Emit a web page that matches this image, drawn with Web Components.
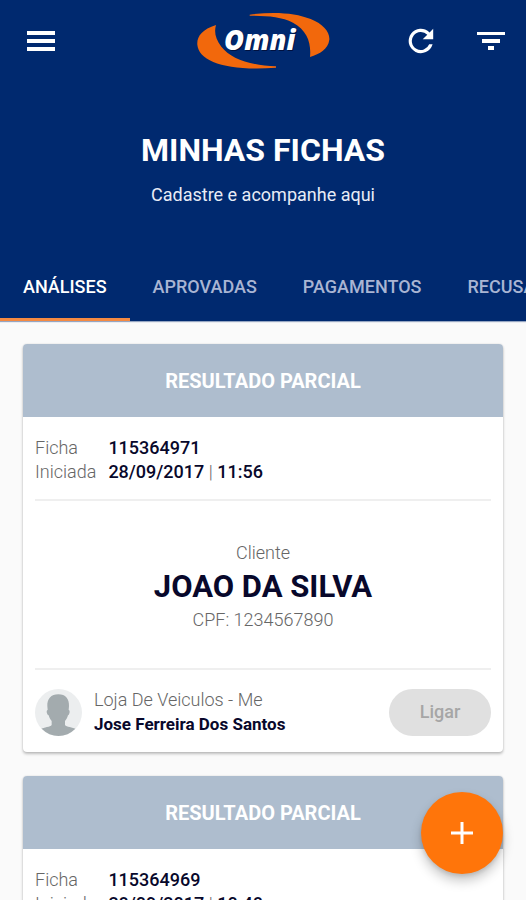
<!DOCTYPE html>
<html lang="pt-BR">
<head>
<meta charset="utf-8">
<meta name="viewport" content="width=device-width, initial-scale=1">
<title>Minhas Fichas</title>
<style>
  body { margin: 0; font-family: Roboto, "Liberation Sans", sans-serif; font-size: 18px; line-height: 24px; color: #08082b; background: #fafafa; }
</style>
</head>
<body>
<fichas-app></fichas-app>

<template id="t-app">
  <style>
    :host { display: flex; flex-direction: column; height: 100vh; }
    header { background: #00296f; color: #fff; flex: none; box-shadow: 0 1px 1px #00296f66; }
    main { flex: 1; min-height: 0; overflow-y: auto; scrollbar-width: none; display: flex; flex-direction: column; gap: 24px; padding: 23px; }
    fab-button { position: fixed; right: 23px; bottom: 26px; }
  </style>
  <header>
    <top-bar></top-bar>
    <page-title>
      MINHAS FICHAS
      <span slot="subtitle">Cadastre e acompanhe aqui</span>
    </page-title>
    <tab-strip>
      <tab-item selected>ANÁLISES</tab-item>
      <tab-item>APROVADAS</tab-item>
      <tab-item>PAGAMENTOS</tab-item>
      <tab-item>RECUSADAS</tab-item>
    </tab-strip>
  </header>
  <main>
    <ficha-card>
      <span slot="status">RESULTADO PARCIAL</span>
      <span slot="number">115364971</span>
      <span slot="date">28/09/2017</span>
      <span slot="time">11:56</span>
      <span slot="client">JOAO DA SILVA</span>
      <span slot="cpf">1234567890</span>
      <span slot="store">Loja De Veiculos - Me</span>
      <span slot="seller">Jose Ferreira Dos Santos</span>
    </ficha-card>
    <ficha-card>
      <span slot="status">RESULTADO PARCIAL</span>
      <span slot="number">115364969</span>
      <span slot="date">28/09/2017</span>
      <span slot="time">10:48</span>
      <span slot="client">JOAO DA SILVA</span>
      <span slot="cpf">1234567890</span>
      <span slot="store">Loja De Veiculos - Me</span>
      <span slot="seller">Jose Ferreira Dos Santos</span>
    </ficha-card>
  </main>
  <fab-button></fab-button>
</template>

<template id="t-bar">
  <style>
    :host { display: grid; grid-template-columns: 1fr auto 1fr; align-items: center; height: 82px; padding: 0 18px; }
    button { display: grid; place-items: center; width: 46px; height: 46px; padding: 0; border: 0; background: none; color: inherit; cursor: pointer; }
    .actions { display: flex; gap: 24px; justify-content: flex-end; margin-right: -6px; }
    svg { display: block; fill: #fff; }
  </style>
  <button aria-label="Menu">
    <svg width="28" height="20" viewBox="0 0 28 20"><path d="M0 0h28v4H0zM0 8h28v4H0zM0 16h28v4H0z"/></svg>
  </button>
  <omni-logo></omni-logo>
  <div class="actions">
    <button aria-label="Atualizar">
      <svg width="26" height="26" viewBox="0 0 26 26"><path d="M21.600 4.400A12.200 12.200 0 1 0 24.600 16.300H21.200A9 9 0 1 1 19.300 6.700L14.700 11.300H25.200V.8z"/></svg>
    </button>
    <button aria-label="Filtrar">
      <svg width="28" height="20" viewBox="0 0 28 20"><path d="M0 1h28v3H0zM5 8h18v4H5zM11 15h6v4h-6z"/></svg>
    </button>
  </div>
</template>

<template id="t-logo">
  <style>
    :host { display: block; }
    svg { display: block; }
    text { font-family: "Open Sans", Lato, sans-serif; font-weight: 800; font-style: italic; font-size: 82px; }
  </style>
  <svg width="136" height="60" viewBox="45 33 408 180" role="img" aria-label="Omni">
    <g fill="#f2680c">
      <path d="M108 75C66 88 50 110 52 134C56 184 140 214 288 203V199C210 196 152 176 124 140C106 116 102 96 108 75Z"/>
      <path d="M209 44C280 34 345 38 392 57C430 72 450 97 448 119C444 148 420 161 390 171C394 128 382 92 339 68C304 50 262 47 209 47Z"/>
    </g>
    <text x="135" y="153" fill="#00113f">Omni</text>
    <text x="132" y="149" fill="#fff">Omni</text>
  </svg>
</template>

<template id="t-title">
  <style>
    :host { display: block; text-align: center; padding: 48px 24px 47px; }
    h1 { margin: 0; font-size: 32px; line-height: 40px; font-weight: 700; }
    p { margin: 13px 0 0; color: #e8ecf6; }
  </style>
  <h1><slot></slot></h1>
  <p><slot name="subtitle"></slot></p>
</template>

<template id="t-tabs">
  <style>
    :host { display: flex; overflow-x: auto; scrollbar-width: none; }
  </style>
  <slot></slot>
</template>

<template id="t-tab">
  <style>
    :host { display: block; flex: none; }
    button { display: block; height: 67px; padding: 2px 23px 0; border: 0; border-bottom: 3px solid transparent; background: none; font: 500 18px/24px Roboto, "Liberation Sans", sans-serif; color: #a9b5d3; cursor: pointer; }
    :host([selected]) button { color: #fff; border-color: #f58a42; }
  </style>
  <button><slot></slot></button>
</template>

<template id="t-card">
  <style>
    :host { display: block; flex: none; background: #fff; border-radius: 4px; overflow: hidden; box-shadow: 0 2px 3px #0000003d, 0 0 2px #0000001f; }
    h2 { margin: 0; padding: 25px 12px 24px; font-size: 20px; line-height: 24px; font-weight: 700; text-align: center; color: #fff; background: #aebdce; }
    .body { padding: 0 12px; }
    dl { display: grid; grid-template-columns: auto 1fr; column-gap: 12px; margin: 0; padding: 19px 0 15px; }
    dt, .muted { color: #666; font-weight: 300; }
    dd { margin: 0; font-weight: 500; }
    .client { display: flex; flex-direction: column; align-items: center; padding: 40px 0 36px; border: solid #efefef; border-width: 2px 0; }
    .name { font-size: 31px; line-height: 43px; font-weight: 700; }
    .foot { display: flex; align-items: center; gap: 12px; padding: 18px 0 16px; }
    .who { flex: 1; min-width: 0; }
    .seller { font-size: 17px; font-weight: 700; }
    svg { display: block; flex: none; }
    button { height: 47px; width: 102px; padding: 0; border: 0; border-radius: 24px; background: #e0e0e0; color: #a6a6a6; font: 500 18px/24px Roboto, "Liberation Sans", sans-serif; }
  </style>
  <h2><slot name="status"></slot></h2>
  <div class="body">
    <dl>
      <dt>Ficha</dt><dd><slot name="number"></slot></dd>
      <dt>Iniciada</dt><dd><slot name="date"></slot> <span class="muted">|</span> <slot name="time"></slot></dd>
    </dl>
    <div class="client">
      <span class="muted">Cliente</span>
      <span class="name"><slot name="client"></slot></span>
      <span class="muted">CPF: <slot name="cpf"></slot></span>
    </div>
    <div class="foot">
      <svg width="47" height="47" viewBox="0 0 141 141" aria-hidden="true">
        <clipPath id="c"><circle cx="70.500" cy="70.500" r="70.500"/></clipPath>
        <circle cx="70.500" cy="70.500" r="70.500" fill="#eceeef"/>
        <path clip-path="url(#c)" fill="#a3abae" d="M70 16C92 16 103 30 102 51L101 63C106 63 104 77 99 79C97 87 94 92 90 96V108C94 114 112 114 124 121V141H16V121C28 114 46 114 50 108V96C46 92 43 87 41 79C35 77 33 63 38 63L37 51C36 30 48 16 70 16Z"/>
      </svg>
      <div class="who">
        <div class="muted"><slot name="store"></slot></div>
        <div class="seller"><slot name="seller"></slot></div>
      </div>
      <button disabled>Ligar</button>
    </div>
  </div>
</template>

<template id="t-fab">
  <style>
    :host { display: block; }
    button { display: grid; place-items: center; width: 82px; height: 82px; padding: 0; border: 0; border-radius: 50%; background: #ff750a; box-shadow: 0 7px 12px #00000038, 0 2px 4px #0000001f; cursor: pointer; }
    svg { display: block; }
  </style>
  <button aria-label="Nova ficha">
    <svg width="22" height="22" viewBox="0 0 22 22"><path fill="#fff" d="M9.500 0h3v9.500H22v3h-9.500V22h-3v-9.500H0v-3h9.500z"/></svg>
  </button>
</template>

<script>
  const define = (name, templateId) => customElements.define(name, class extends HTMLElement {
    constructor() {
      super();
      this.attachShadow({ mode: "open" })
        .append(document.getElementById(templateId).content.cloneNode(true));
    }
  });
  define("omni-logo", "t-logo");
  define("top-bar", "t-bar");
  define("page-title", "t-title");
  define("tab-item", "t-tab");
  define("tab-strip", "t-tabs");
  define("ficha-card", "t-card");
  define("fab-button", "t-fab");
  define("fichas-app", "t-app");
</script>
</body>
</html>
